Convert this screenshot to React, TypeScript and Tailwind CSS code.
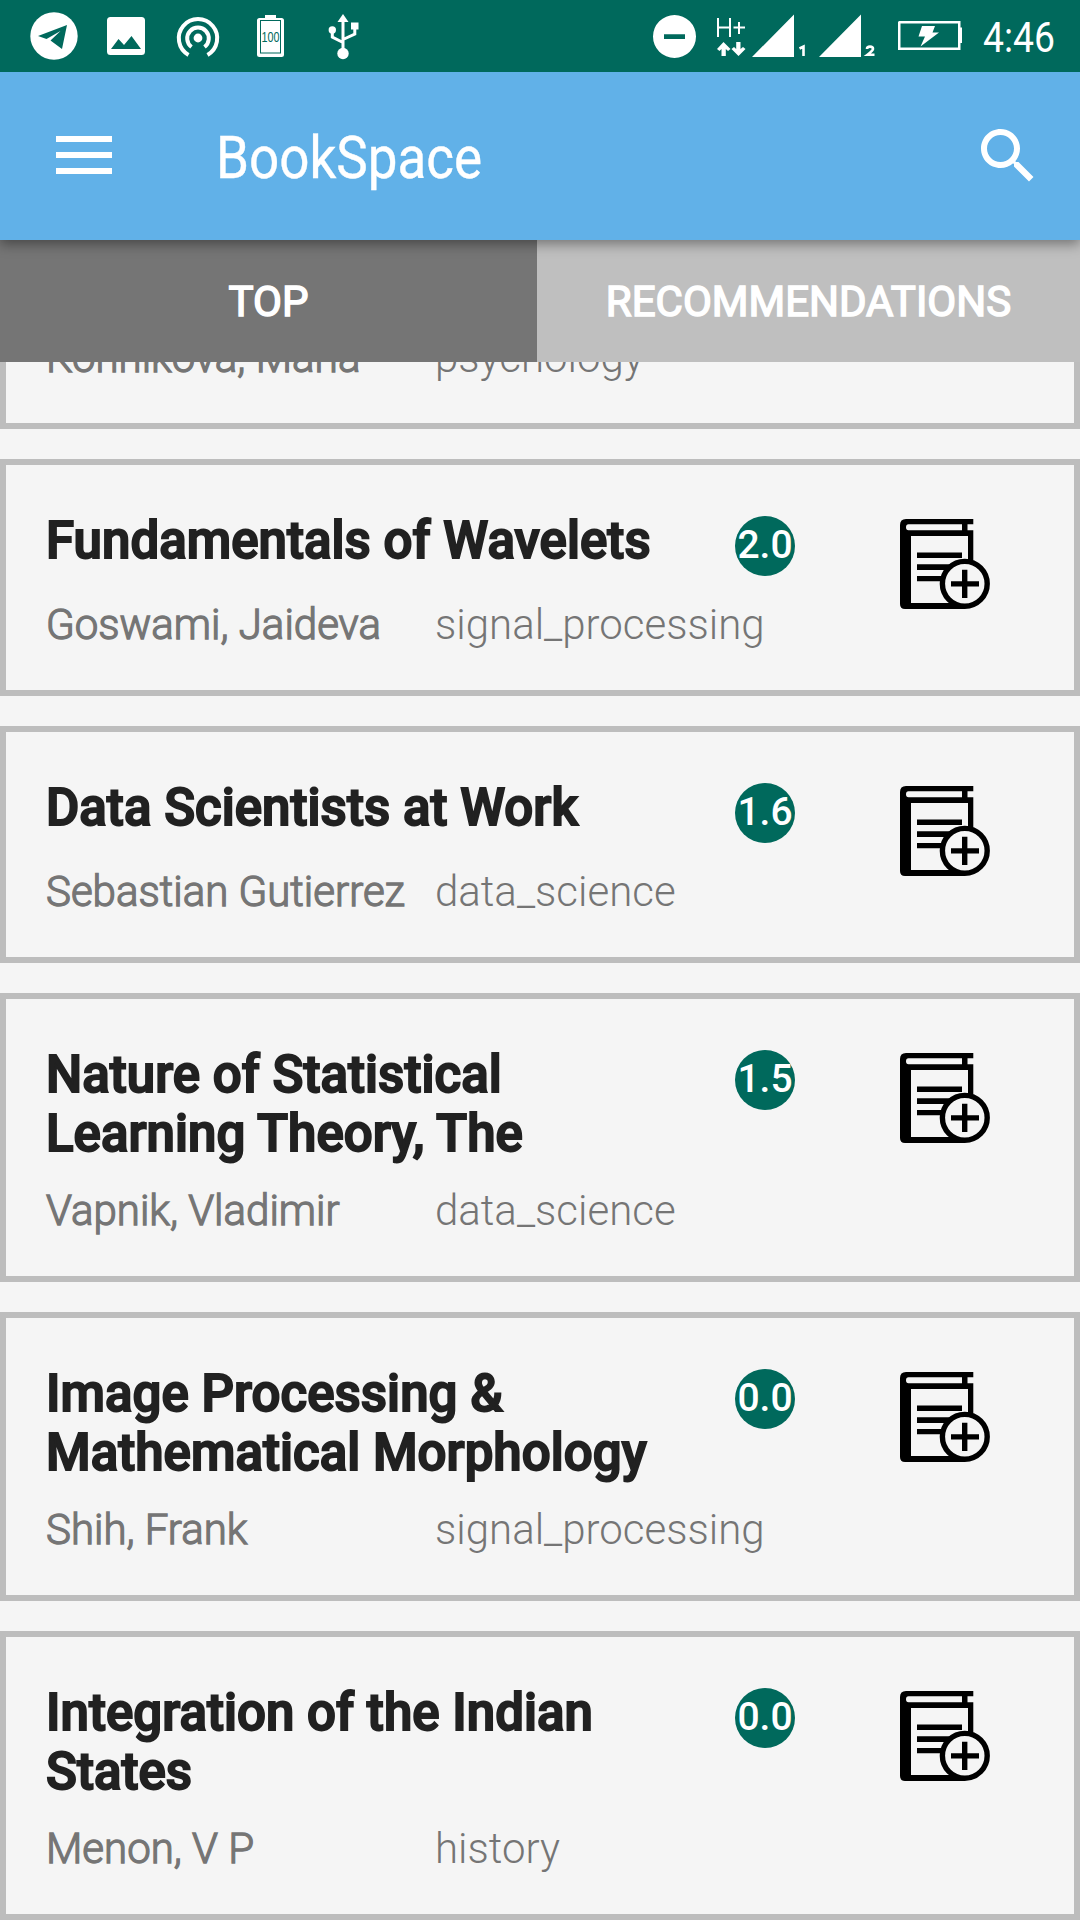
import React from "react";

type Book = { title: string[]; author: string; category: string; rating: string };

const books: Book[] = [
  { title: ["Fundamentals of Wavelets"], author: "Goswami, Jaideva", category: "signal_processing", rating: "2.0" },
  { title: ["Data Scientists at Work"], author: "Sebastian Gutierrez", category: "data_science", rating: "1.6" },
  { title: ["Nature of Statistical", "Learning Theory, The"], author: "Vapnik, Vladimir", category: "data_science", rating: "1.5" },
  { title: ["Image Processing &", "Mathematical Morphology"], author: "Shih, Frank", category: "signal_processing", rating: "0.0" },
  { title: ["Integration of the Indian", "States"], author: "Menon, V P", category: "history", rating: "0.0" },
];

function AddBookIcon() {
  return (
    <svg width="90" height="90" viewBox="0 0 90 90" className="block">
      <path
        fillRule="evenodd"
        d="M6 0H73.3V5.3H67.5V11.3H73.3V45H68V17H11V84H65V90H5Q0 90 0 85V6Q0 0 6 0ZM8.5 5.3Q6 5.3 6 8.3Q6 11.3 8.5 11.3H62V5.3Z"
      />
      <path d="M17 33.5H62V39H17ZM17 45.3H50V51H17ZM17 57H45V62.3H17Z" />
      <circle cx="64.8" cy="64.8" r="22.4" fill="#f5f5f5" stroke="#000" strokeWidth="5.4" />
      <path d="M62 50.7H67.4V62.2H79V67.5H67.4V79H62V67.5H51V62.2H62Z" />
    </svg>
  );
}

function Meta({ author, category }: { author: string; category: string }) {
  return (
    <div className="flex h-[49px] text-[42px] leading-[49px] font-light whitespace-nowrap text-[#757575]">
      <span className="w-[389px] shrink-0 [-webkit-text-stroke:1.3px_#757575]">{author}</span>
      <span>{category}</span>
    </div>
  );
}

function BookCard({ book }: { book: Book }) {
  return (
    <article className="mb-[30px] flex shrink-0 border-[6px] border-[#bdbdbd] pt-[46px] pb-[41px] pl-10">
      <div className="w-[689px]">
        <h2 className="mb-[23px] min-h-[66px] text-[51px] leading-[59px] font-medium tracking-[0.04px] whitespace-nowrap text-[#212121] [-webkit-text-stroke:1.9px_#212121]">
          {book.title.map((line) => (
            <div key={line}>{line}</div>
          ))}
        </h2>
        <Meta author={book.author} category={book.category} />
      </div>
      <div className="mt-[5px] flex size-[60px] items-center justify-center rounded-full bg-[#00695c] text-[39px] leading-[56px] font-medium text-white">
        <span className="mb-[3px]">{book.rating}</span>
      </div>
      <button className="mt-2 ml-[105px] size-[90px]">
        <AddBookIcon />
      </button>
    </article>
  );
}

function StatusBar() {
  return (
    <div className="relative z-20 flex h-[72px] shrink-0 items-center bg-[#00695c]">
      <svg width="400" height="72" viewBox="0 0 400 72" fill="#fff">
        <circle cx="54" cy="36" r="23.7" />
        <path fill="#00695c" d="M38 36L67 25L62 49L50.5 40.5L60.5 31L46.5 39Z" />
        <path fillRule="evenodd" d="M110.500 17H141.500Q145 17 145 20.500V51.500Q145 55 141.500 55H110.500Q107 55 107 51.500V20.500Q107 17 110.500 17ZM111 49H141L131.500 36L124 45L118.500 39Z" />
        <g fill="none" stroke="#fff" strokeWidth="4">
          <path d="M188.500 55A19.200 19.200 0 1 1 207.500 55" />
          <path d="M191.500 47A10.800 10.800 0 1 1 204.500 47" />
        </g>
        <circle cx="198" cy="38" r="4.400" />
        <path d="M265 15H276V18H281.500Q284 18 284 20.500V54.500Q284 57 281.500 57H259.500Q257 57 257 54.500V20.500Q257 18 259.500 18H265Z" />
        <rect x="260.500" y="20.500" width="20" height="32.500" fill="none" stroke="#00695c" />
        <text x="270.500" y="42" textAnchor="middle" fontSize="15" fontFamily="Liberation Sans" fill="#00695c" textLength="18" lengthAdjust="spacingAndGlyphs">100</text>
        <circle cx="343" cy="53.500" r="5.700" />
        <circle cx="332.300" cy="30" r="3.700" />
        <path d="M343 14L348.500 22H337.500ZM351 22.500H358.500V29.500H351Z" />
        <path fill="none" stroke="#fff" strokeWidth="3" d="M343 20V52M332.300 30V37L343 42.500M354.800 28V34L343 39.500" />
      </svg>
      <svg width="680" height="72" viewBox="400 0 680 72" fill="#fff" className="shrink-0">
        <path fillRule="evenodd" d="M674.500 15A21.500 21.500 0 1 1 674.500 58A21.500 21.500 0 1 1 674.500 15ZM664 34.300V39H685V34.300Z" />
        <path fill="none" stroke="#fff" strokeWidth="2" d="M718 18V37M730 18V37M718 27.500H730M733.500 27.500H745M739 22V34" />
        <path d="M723.500 42L730.500 49L728 51L725.800 49V56H721.500V49L719.500 51L717 49ZM738.500 56L731.500 49L734 47L736.200 49V42H740.500V49L743 47L745.500 49Z" />
        <path d="M752 57L794 14.500V57ZM819 57L861 14.500V57Z" />
        <path fill="none" stroke="#fff" strokeWidth="2.600" d="M799.500 48.500L803.500 46.500V56M867 49Q867 46.600 870 46.600Q873 46.600 873 49Q873 50.500 867.500 54.700H874.500" />
        <path fillRule="evenodd" d="M899 21H960.500V27.500H962V43H960.500V50H898V22ZM900.500 23.500V47.500H958V23.500Z" />
        <path d="M922 26H935L932.500 32.500H939L920.500 46.500L925 36.500H918.500Z" />
        <text x="983" y="52" fontSize="42" fontFamily="Roboto" textLength="72" lengthAdjust="spacingAndGlyphs">4:46</text>
      </svg>
    </div>
  );
}

export default function App() {
  return (
    <div className="flex h-[1920px] w-[1080px] flex-col overflow-hidden bg-[#f5f5f5] font-[Roboto,sans-serif]">
      <StatusBar />
      <header className="relative z-10 flex h-[168px] shrink-0 items-center bg-[#61b1e8] pr-9 pl-14 shadow-[0_4px_12px_rgba(0,0,0,0.4)]">
        <button className="-mt-[2px] flex w-14 flex-col gap-[10px]">
          <span className="h-[6px] bg-white" />
          <span className="h-[6px] bg-white" />
          <span className="h-[6px] bg-white" />
        </button>
        <h1 className="mt-1 ml-[104px] origin-left scale-x-[0.883] text-[60px] leading-[70px] text-white [-webkit-text-stroke:0.4px_white]">BookSpace</h1>
        <svg className="ml-auto" width="72" height="72" viewBox="0 0 24 24" fill="#fff">
          <path d="M15.500 14h-.79l-.28-.27C15.410 12.590 16 11.110 16 9.500 16 5.910 13.090 3 9.500 3S3 5.910 3 9.500 5.910 16 9.500 16c1.610 0 3.090-.59 4.230-1.570l.27.28v.79l5 4.990L20.490 19l-4.990-5zm-6 0C7.010 14 5 11.990 5 9.500S7.010 5 9.500 5 14 7.010 14 9.500 11.990 14 9.500 14z" />
        </svg>
      </header>
      <nav className="flex h-[122px] shrink-0 text-[42px] font-normal text-white [-webkit-text-stroke:1.5px_white]">
        <div className="flex w-[537px] items-center justify-center bg-[#757575] pt-px">TOP</div>
        <div className="flex flex-1 items-center justify-center bg-[#bfbfbf] pt-px">RECOMMENDATIONS</div>
      </nav>
      <main className="flex flex-1 flex-col overflow-hidden">
        <article className="mb-[30px] flex h-[67px] shrink-0 items-end overflow-hidden border-x-[6px] border-b-[6px] border-[#bdbdbd] pb-[41px] pl-10">
          <Meta author="Konnikova, Maria" category="psychology" />
        </article>
        {books.map((b) => (
          <BookCard key={b.author} book={b} />
        ))}
      </main>
    </div>
  );
}
